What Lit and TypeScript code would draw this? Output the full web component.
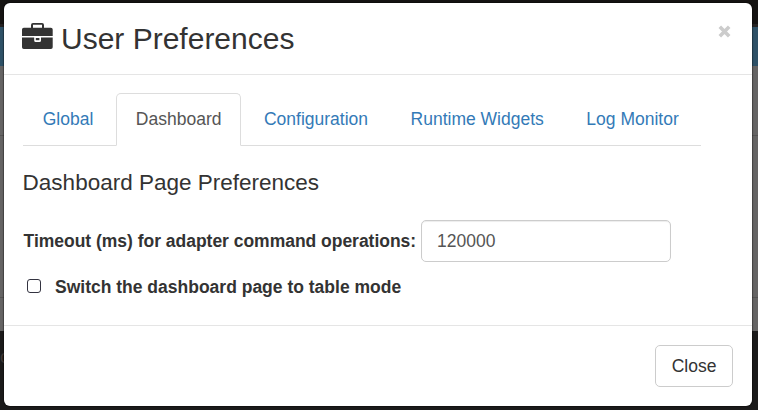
import { LitElement, html, css } from "lit";
import { customElement, state } from "lit/decorators.js";

@customElement("app-root")
export class AppRoot extends LitElement {
  @state() private active = "Dashboard";
  private tabs = ["Global", "Dashboard", "Configuration", "Runtime Widgets", "Log Monitor"];

  static styles = css`
    :host {
      display: block;
      position: relative;
      width: 758px;
      height: 410px;
      overflow: hidden;
      font: 17.5px/25px "Liberation Sans", Arial, sans-serif;
      color: #333;
    }
    * { box-sizing: border-box; }
    .page {
      position: absolute;
      inset: 0;
      display: flex;
      flex-direction: column;
      background: #1b1a1a;
    }
    .top { height: 27px; background: #151312; border-bottom: 3px solid #252222; }
    .banner { height: 39px; background: #2e5167; }
    .sheet { height: 265px; background: #656464; }
    .row { height: 70px; border-bottom: 1px solid #545353; }
    .row + .row { height: 162px; }
    .foot { padding-top: 14px; color: #3f3733; }
    .dialog {
      position: relative;
      width: 748px;
      height: 403px;
      margin: 3px 0 0 4px;
      background: #fff;
      border-radius: 6px;
      box-shadow: 0 0 1px 1px rgba(0, 0, 0, 0.35);
      display: flex;
      flex-direction: column;
    }
    .header {
      display: flex;
      height: 72px;
      padding: 19px 21px 0 18px;
      border-bottom: 1px solid #e5e5e5;
    }
    .brief { width: 31px; height: 26px; margin: 1px 8px 0 0; }
    .title { margin: 0; flex: 1; font-size: 30px; line-height: 33px; font-weight: 500; }
    .x { width: 13px; height: 13px; margin-top: 3px; }
    .body { height: 250px; padding: 18px 19px 0; }
    .tabs {
      display: flex;
      width: 678px;
      height: 53px;
      gap: 3px;
      border-bottom: 1px solid #ddd;
    }
    .tab {
      height: 53px;
      padding: 13px 18.75px 0;
      border: 1px solid transparent;
      border-radius: 5px 5px 0 0;
      color: #337ab7;
      cursor: pointer;
      white-space: nowrap;
    }
    .tab.active { color: #555; background: #fff; border-color: #ddd; border-bottom-color: #fff; }
    .subtitle { margin: 24px 0 0 -0.4px; font-size: 22.5px; line-height: 25px; font-weight: 500; }
    .field { display: flex; align-items: center; height: 42px; margin-top: 25px; padding-left: 0.6px; font-weight: 700; }
    .caption { width: 392.4px; white-space: nowrap; letter-spacing: -0.022px; }
    .input {
      width: 250px;
      height: 42px;
      margin-left: 5px;
      padding: 0 15px;
      font: inherit;
      font-weight: 400;
      color: #555;
      border: 1px solid #ccc;
      border-radius: 5px;
      box-shadow: inset 0 1px 1px rgba(0, 0, 0, 0.075);
      outline: none;
    }
    .check { display: flex; align-items: flex-start; height: 25px; margin-top: 13px; padding-left: 4px; font-weight: 700; }
    .box {
      appearance: none;
      width: 14px;
      height: 14px;
      margin: 4px 14px 0 0;
      border: 1px solid #333340;
      border-radius: 3px;
    }
    .footer {
      flex: 1;
      display: flex;
      justify-content: flex-end;
      align-items: flex-start;
      padding: 19px 19px 0;
      border-top: 1px solid #e5e5e5;
    }
    .close {
      width: 78px;
      height: 42px;
      padding: 0;
      font: inherit;
      color: #333;
      background: #fff;
      border: 1px solid #ccc;
      border-radius: 5px;
    }
  `;

  render() {
    return html`
      <div class="page">
        <div class="top"></div>
        <div class="banner"></div>
        <div class="sheet"><div class="row"></div><div class="row"></div></div>
        <div class="foot">c</div>
      </div>
      <div class="dialog" role="dialog">
        <div class="header">
          <svg class="brief" viewBox="0 0 31 26">
            <path fill="#333" fill-rule="evenodd" d="M9 4.7V2Q9 0 11 0H20Q22 0 22 2V4.7H28.9Q30.7 4.7 30.7 6.5V13H0V6.5Q0 4.7 1.8 4.7ZM11 4.7H20V1.8H11Z" />
            <path fill="#333" d="M0 14.4H12.2V17.4Q12.2 19 13.8 19H17.4Q19 19 19 17.4V14.4H30.7V24.2Q30.7 26 28.9 26H1.8Q0 26 0 24.2Z" />
            <path fill="#333" d="M13.8 15H17.4V17.2H13.8Z" />
          </svg>
          <h3 class="title">User Preferences</h3>
          <svg class="x" viewBox="0 0 13 13"><path d="M1.8 1.8L11.2 11.2M11.2 1.8L1.8 11.2" stroke="#ccc" stroke-width="3.6" /></svg>
        </div>
        <div class="body">
          <div class="tabs">
            ${this.tabs.map((t) => html`<div class="tab ${t === this.active ? "active" : ""}" @click=${() => (this.active = t)}>${t}</div>`)}
          </div>
          <h4 class="subtitle">Dashboard Page Preferences</h4>
          <label class="field"><span class="caption">Timeout (ms) for adapter command operations:</span><input class="input" .value=${"120000"} /></label>
          <label class="check"><input class="box" type="checkbox" />Switch the dashboard page to table mode</label>
        </div>
        <div class="footer"><button class="close">Close</button></div>
      </div>
    `;
  }
}
